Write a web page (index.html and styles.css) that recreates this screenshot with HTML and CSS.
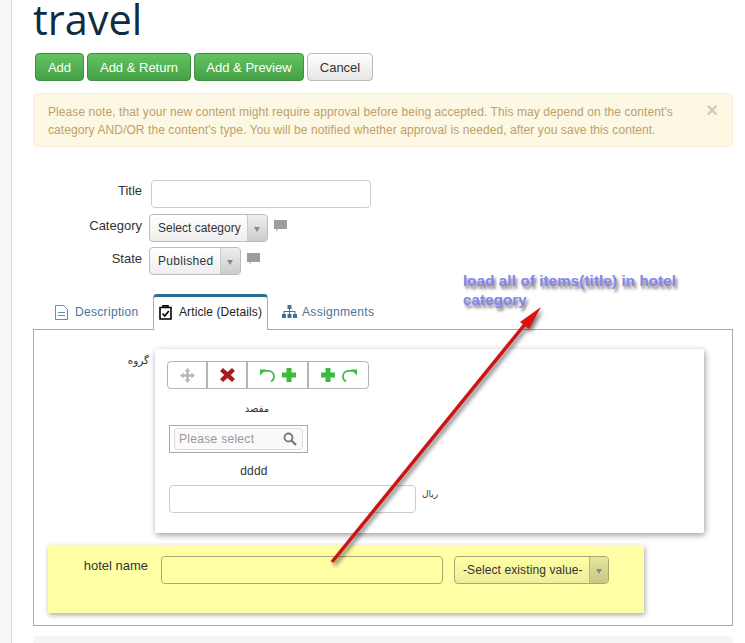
FILE: index.html
```html
<!DOCTYPE html>
<html>

<head>
    <meta charset="UTF-8">
    <meta name="viewport" content="width=device-width, initial-scale=1.0">
    <link rel="stylesheet" href="styles.css">
</head>

<body>
    <div class="page">
        <div class="gutter"></div>

        <div class="main">
            <h1 class="page-title">travel</h1>

            <!-- toolbar -->
            <div class="actions">
                <button class="btn btn-green btn-add">Add</button>
                <button class="btn btn-green btn-return">Add &amp; Return</button>
                <button class="btn btn-green btn-preview">Add &amp; Preview</button>
                <button class="btn btn-cancel">Cancel</button>
            </div>

            <!-- approval notice -->
            <div class="notice">
                <p>Please note, that your new content might require approval before being accepted. This may depend on the content's category AND/OR the content's type. You will be notified whether approval is needed, after you save this content.</p>
                <span class="notice-close">&times;</span>
            </div>

            <!-- basic fields -->
            <div class="fields">
                <div class="field field-title">
                    <label>Title</label>
                    <div class="text-input title-input"></div>
                </div>
                <div class="field field-category">
                    <label>Category</label>
                    <div class="select category-select">
                        <span class="select-value">Select category</span>
                        <span class="select-arrow"></span>
                    </div>
                    <svg class="comment" viewBox="0 0 13 12"><path d="M0 0H13V9H4L2.500 12V9H0Z" /></svg>
                </div>
                <div class="field field-state">
                    <label>State</label>
                    <div class="select state-select">
                        <span class="select-value">Published</span>
                        <span class="select-arrow"></span>
                    </div>
                    <svg class="comment" viewBox="0 0 13 12"><path d="M0 0H13V9H4L2.500 12V9H0Z" /></svg>
                </div>
            </div>

            <!-- tabs -->
            <div class="tabs">
                <div class="tab tab-description">
                    <svg class="tab-icon" viewBox="0 0 13 15"><path d="M.5 .5H8.500L12.500 4.500V14.500H.5ZM3 7.500H10M3 10.500H10" fill="none" stroke="#5f8db0" /></svg>
                    Description
                </div>
                <div class="tab tab-active">
                    <svg class="tab-icon" viewBox="0 0 13 15"><path d="M1 2.500H12V14H1ZM4 2.500V.8H9V2.500M3.500 8.500L5.800 11L9.800 6" fill="none" stroke="#000" stroke-width="1.600" /></svg>
                    Article (Details)
                </div>
                <div class="tab tab-assignments">
                    <svg class="tab-icon tab-icon-wide" viewBox="0 0 15 14"><path d="M5.500 0H9.500V4H8V6H13.500V9H15V13H11V9H12.500V7H8V9H9.500V13H5.500V9H7V7H2.500V9H4V13H0V9H1.500V6H7V4H5.500Z" fill="#3f729b" /></svg>
                    Assignments
                </div>
            </div>

            <div class="panel">
                <div class="group-row">
                    <div class="group-label">گروه</div>
                    <div class="repeat-card">
                        <div class="repeat-tools">
                            <span class="tool tool-move">
                                <svg viewBox="0 0 15 15" width="15" height="15"><path d="M7.500 0L10.500 3.500H8.700V6.300H11.500V4.500L15 7.500L11.500 10.500V8.700H8.700V11.500H10.500L7.500 15L4.500 11.500H6.300V8.700H3.500V10.500L0 7.500L3.500 4.500V6.300H6.300V3.500H4.500Z" fill="#b4b8bc" /></svg>
                            </span>
                            <span class="tool tool-delete">
                                <svg viewBox="0 0 15 14" width="15" height="14"><path d="M0 3L3 0L7.500 4L12 0L15 3L10.800 7L15 11L12 14L7.500 10L3 14L0 11L4.200 7Z" fill="#a51d1d" /></svg>
                            </span>
                            <span class="tool tool-before">
                                <svg viewBox="0 0 15 13" width="15" height="13"><path d="M3 1.800H8C12 1.800 14 4.500 14 7.500C14 9.500 13 11.500 11 12.500" fill="none" stroke="#3dbb3d" stroke-width="1.700" /><path d="M0 0.500V6.500L6 .5Z" fill="#3dbb3d" /></svg>
                                <svg viewBox="0 0 14 14" width="14" height="14"><path d="M4.500 0H9.500V4.500H14V9.500H9.500V14H4.500V9.500H0V4.500H4.500Z" fill="#3dbb3d" /></svg>
                            </span>
                            <span class="tool tool-after">
                                <svg viewBox="0 0 14 14" width="14" height="14"><path d="M4.500 0H9.500V4.500H14V9.500H9.500V14H4.500V9.500H0V4.500H4.500Z" fill="#3dbb3d" /></svg>
                                <svg viewBox="0 0 15 13" width="15" height="13"><path d="M12 1.800H7C3 1.800 1 4.500 1 7.500C1 9.500 2 11.500 4 12.500" fill="none" stroke="#3dbb3d" stroke-width="1.700" /><path d="M15 0.500V6.500L9 .5Z" fill="#3dbb3d" /></svg>
                            </span>
                        </div>

                        <div class="sub-label sub-label-fa">مقصد</div>
                        <div class="search-box">
                            <div class="search-inner">
                                <span>Please select</span>
                                <svg viewBox="0 0 14 14" width="14" height="14"><circle cx="5.500" cy="5.500" r="4" fill="none" stroke="#777" stroke-width="1.800" /><path d="M8.500 8.500L13 13" stroke="#777" stroke-width="2.200" /></svg>
                            </div>
                        </div>

                        <div class="sub-label sub-label-en">dddd</div>
                        <div class="price-row">
                            <div class="text-input price-input"></div>
                            <span class="price-unit">ریال</span>
                        </div>
                    </div>
                </div>

                <!-- highlighted field -->
                <div class="hotel-row">
                    <label>hotel name</label>
                    <div class="text-input hotel-input"></div>
                    <div class="select hotel-select">
                        <span class="select-value">-Select existing value-</span>
                        <span class="select-arrow"></span>
                    </div>
                </div>
            </div>

            <div class="footer-bar"></div>
        </div>
    </div>

    <!-- annotation drawn over the screenshot -->
    <div class="note-text">load all of items(title) in hotel category</div>
    <svg class="note-arrow" viewBox="0 0 745 643" width="745" height="643">
        <path d="M332 562L526 323" stroke="#cc1414" stroke-width="3.500" fill="none" />
        <path d="M541 307L520 322L529 329Z" fill="#e01010" />
    </svg>
</body>

</html>
```
FILE: styles.css
```css
html,
body {
    margin: 0;
    padding: 0;
    height: 643px;
    overflow: hidden;
    background-color: #fff;
}

body {
    position: relative;
    font-family: "Liberation Sans", Arial, sans-serif;
    font-size: 12px;
    color: #333;
}

.page {
    display: flex;
    height: 643px;
}

.gutter {
    width: 11px;
    flex: none;
    background-color: #f6f7f9;
    border-right: 1px solid #dcdcdc;
}

.main {
    width: 700px;
    margin-left: 21px;
    flex: none;
}

.page-title {
    margin: 0;
    height: 53px;
    font-family: "Open Sans", sans-serif;
    font-size: 41.5px;
    font-weight: 400;
    line-height: 38px;
    color: #0f2c40;
}

/* buttons */
.actions {
    display: flex;
    gap: 3px;
    margin-left: 2px;
}

.btn {
    height: 28px;
    padding: 0;
    border-radius: 4px;
    font-family: inherit;
    font-size: 13px;
}

.btn-green {
    color: #fff;
    background: linear-gradient(#62c462, #44a044);
    border: 1px solid #3f8f3f;
}

.btn-add { width: 49px; }
.btn-return { width: 104px; }
.btn-preview { width: 110px; }

.btn-cancel {
    width: 66px;
    color: #333;
    background: linear-gradient(#fff, #e6e6e6);
    border: 1px solid #bbb;
}

/* notice */
.notice {
    display: flex;
    justify-content: space-between;
    box-sizing: border-box;
    height: 54px;
    margin-top: 12px;
    padding: 9px 14px 0 14px;
    background-color: #fcf8e3;
    border: 1px solid #fbeed5;
    border-radius: 4px;
    color: #bf9f6b;
    line-height: 18px;
    letter-spacing: 0.08px;
}

.notice p {
    width: 645px;
    margin: 0;
}

.notice-close {
    font-size: 20px;
    font-weight: bold;
    line-height: 14px;
    color: #cfcabb;
}

/* form fields */
.fields {
    margin-top: 33px;
}

.field {
    display: flex;
    align-items: flex-start;
    font-size: 13px;
}

.field label {
    width: 109px;
    flex: none;
    text-align: right;
}

.field-title label {
    padding-top: 3px;
}

.text-input {
    box-sizing: border-box;
    height: 28px;
    background-color: #fff;
    border: 1px solid #ccc;
    border-radius: 4px;
}

.title-input {
    width: 220px;
    margin-left: 9px;
}

.field-category {
    margin-top: 6px;
}

.field-state {
    margin-top: 5px;
}

.field-category label,
.field-state label {
    padding-top: 4px;
}

.select {
    display: flex;
    box-sizing: border-box;
    height: 28px;
    margin-left: 7px;
    background: linear-gradient(#fff, #eee);
    border: 1px solid #bbb;
    border-radius: 4px;
    font-size: 12px;
    line-height: 26px;
    color: #333;
}

.select-value {
    flex: 1;
    padding-left: 8px;
    white-space: nowrap;
}

.select-arrow {
    position: relative;
    width: 19px;
    flex: none;
    background: linear-gradient(#eee, #ccc);
    border-left: 1px solid #ccc;
    border-radius: 0 3px 3px 0;
}

.select-arrow::after {
    content: "";
    position: absolute;
    left: 6px;
    top: 12px;
    border: 3px solid transparent;
    border-top: 5px solid #888;
}

.category-select { width: 119px; }

.state-select {
    width: 92px;
    letter-spacing: 0.3px;
}

.comment {
    width: 13px;
    height: 12px;
    margin: 6px 0 0 6px;
    fill: #a09c98;
}

/* tabs */
.tabs {
    display: flex;
    align-items: flex-end;
    height: 36px;
    margin-top: 19px;
    margin-left: 10px;
    position: relative;
    z-index: 1;
    margin-bottom: -1px;
    color: #4a7399;
    letter-spacing: 0.32px;
}

.tab {
    display: flex;
    align-items: center;
    flex: none;
    box-sizing: border-box;
    height: 36px;
    white-space: nowrap;
}

.tab-description {
    width: 110px;
    gap: 7px;
    padding-left: 12px;
}

.tab-assignments {
    gap: 5px;
    padding: 0 12px 0 14px;
}

.tab-icon {
    width: 13px;
    height: 15px;
    flex: none;
}

.tab-icon-wide {
    width: 15px;
    height: 14px;
}

.tab-active {
    width: 115px;
    gap: 7px;
    background-color: #fff;
    border: 1px solid #aaa;
    border-top: 3px solid #2c6f90;
    border-bottom: none;
    border-radius: 4px 4px 0 0;
    color: #222;
    padding: 0 0 3px 5px;
    letter-spacing: 0.1px;
}

.panel {
    box-sizing: border-box;
    height: 297px;
    border: 1px solid #aaa;
    padding: 19px 28px 0 14px;
}

.footer-bar {
    height: 30px;
    margin-top: 10px;
    background-color: #f5f5f5;
    border-radius: 4px;
}

.group-row {
    display: flex;
}

.group-label {
    width: 101px;
    flex: none;
    padding-top: 5px;
    text-align: right;
    font-family: "DejaVu Sans", sans-serif;
    font-size: 10.5px;
}

.repeat-card {
    box-sizing: border-box;
    width: 549px;
    height: 184px;
    margin-left: 6px;
    padding: 12px 12px 0 12px;
    background-color: #fff;
    border-radius: 2px;
    box-shadow: 1px 2px 6px rgba(0, 0, 0, 0.4);
}

.repeat-tools {
    display: flex;
    width: 202px;
    height: 28px;
    box-sizing: border-box;
    border: 1px solid #b5b5b5;
    border-radius: 4px;
}

.tool {
    display: flex;
    align-items: center;
    justify-content: center;
    gap: 7px;
    box-sizing: border-box;
    border-right: 2px solid #b5b5b5;
}

.tool:last-child {
    border-right: none;
}

.tool-move { width: 40px; }
.tool-delete { width: 40px; }
.tool-before { width: 61px; }
.tool-after { flex: 1; }

.sub-label {
    width: 180px;
    text-align: center;
}

.sub-label-fa {
    width: 180px;
    margin-top: 13px;
    font-family: "DejaVu Sans", sans-serif;
    font-size: 10px;
    line-height: 14px;
}

.sub-label-en {
    margin-top: 10px;
    margin-left: -3px;
    line-height: 16px;
    letter-spacing: 0.2px;
}

.search-box {
    box-sizing: border-box;
    width: 139px;
    height: 28px;
    margin: 9px 0 0 2px;
    padding: 2px 4px;
    border: 1px solid #aaa;
}

.search-inner {
    display: flex;
    align-items: center;
    justify-content: space-between;
    box-sizing: border-box;
    height: 22px;
    padding: 0 5px 0 4px;
    background-color: #fafafa;
    border: 1px solid #ddd;
    border-radius: 3px;
    color: #999;
    letter-spacing: 0.3px;
}

.price-row {
    display: flex;
    margin: 6px 0 0 2px;
}

.price-input {
    width: 247px;
}

.price-unit {
    margin: 4px 0 0 6px;
    font-family: "DejaVu Sans", sans-serif;
    font-size: 9px;
}

/* yellow row */
.hotel-row {
    display: flex;
    align-items: flex-start;
    box-sizing: border-box;
    width: 596px;
    height: 68px;
    margin-top: 12px;
    padding-top: 11px;
    background-color: #ffffa5;
    box-shadow: 1px 2px 5px rgba(0, 0, 0, 0.35);
    font-size: 13px;
}

.hotel-row label {
    width: 100px;
    flex: none;
    padding-top: 2px;
    text-align: right;
}

.hotel-input {
    width: 282px;
    margin-left: 13px;
    background-color: transparent;
    border-color: #a9a96e;
}

.hotel-select {
    width: 155px;
    margin-left: 11px;
    background: linear-gradient(#ffffa5, #eeee9a);
    border-color: #a9a96e;
    letter-spacing: 0.1px;
}

.hotel-select .select-arrow {
    width: 18px;
    background: linear-gradient(#e6e69a, #c8c88a);
    border-left-color: #b5b57c;
}

/* annotation */
.note-text {
    position: absolute;
    left: 463px;
    top: 271px;
    width: 240px;
    font-size: 15px;
    font-weight: bold;
    line-height: 19px;
    letter-spacing: 0.17px;
    color: #8484ee;
    text-shadow: 2px 3px 3px rgba(0, 0, 0, 0.55);
}

.note-arrow {
    position: absolute;
    left: 0;
    top: 0;
    pointer-events: none;
    filter: drop-shadow(2px 3px 2px rgba(0, 0, 0, 0.55));
}
```
